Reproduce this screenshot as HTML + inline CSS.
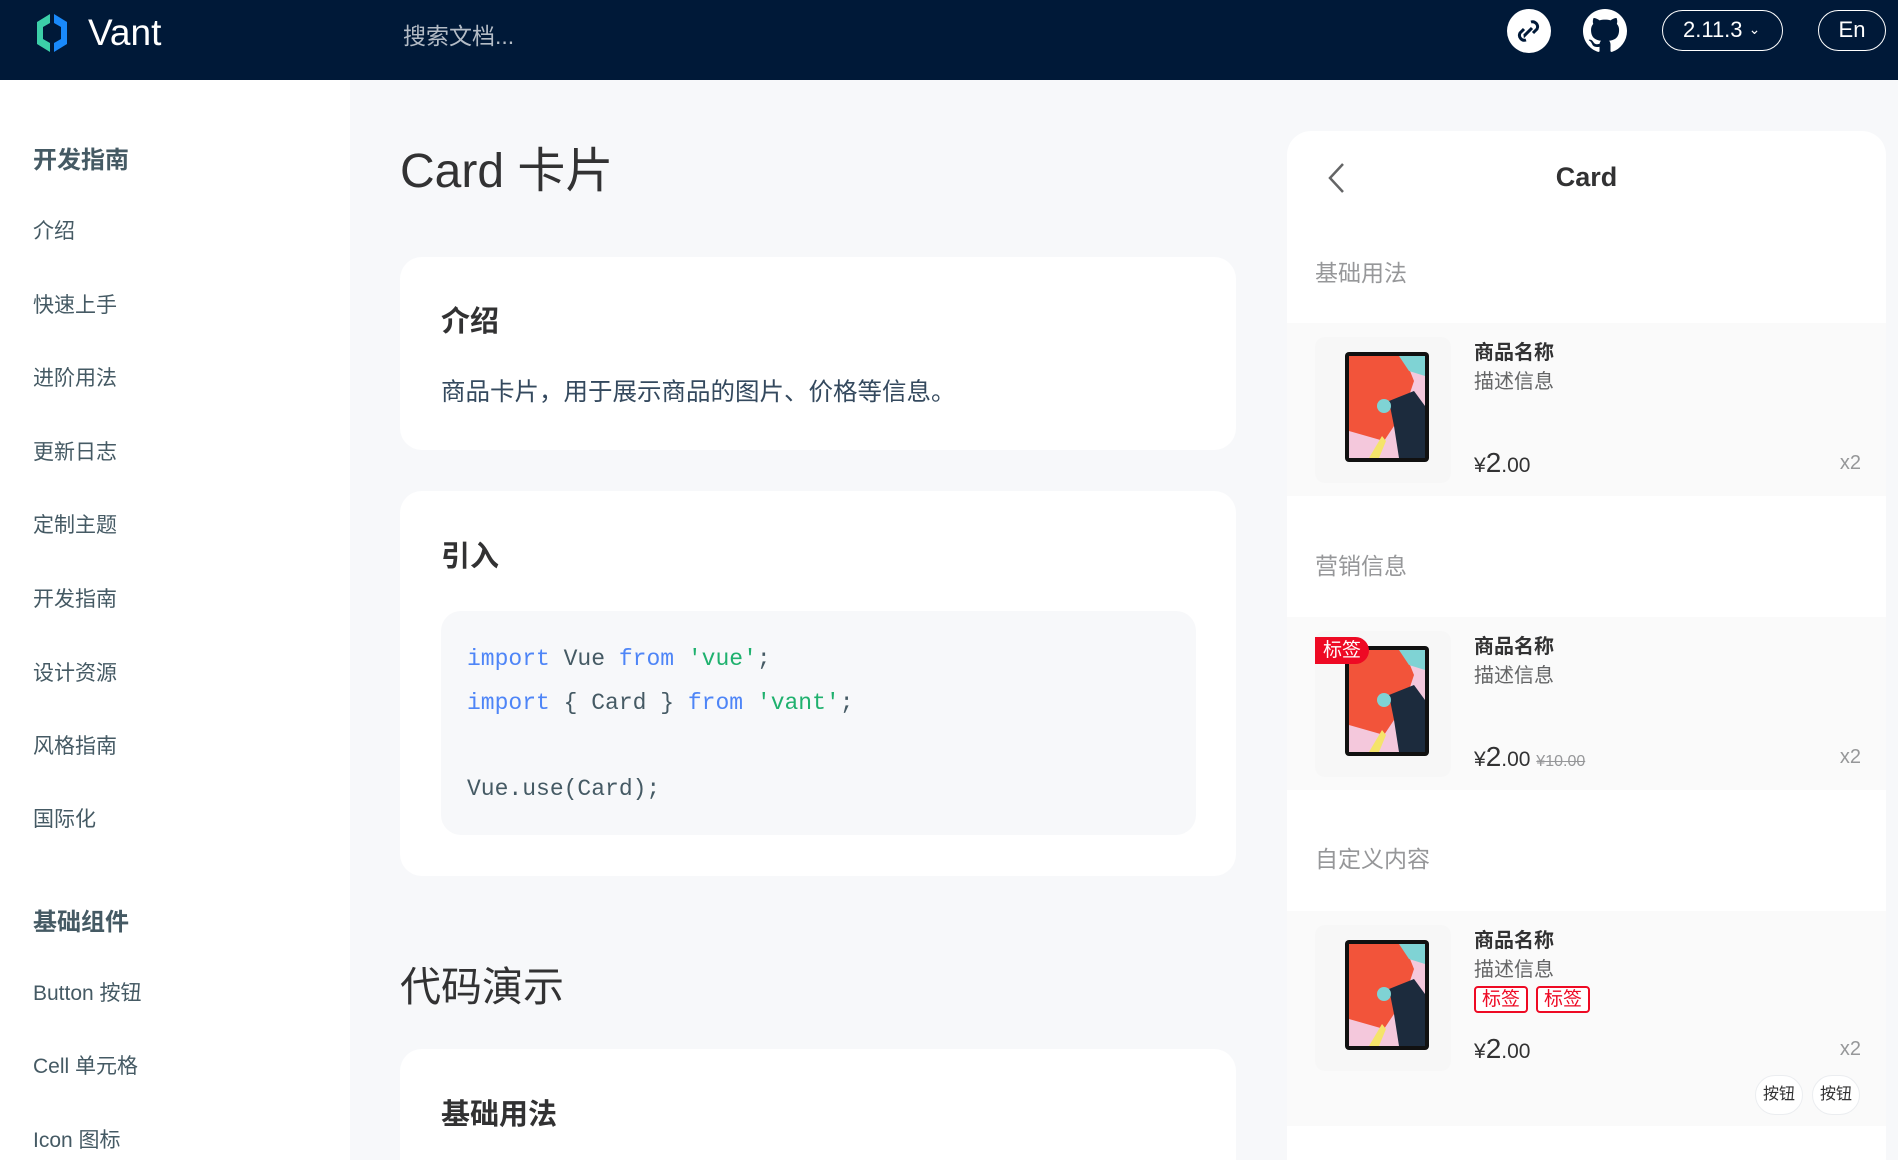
<!DOCTYPE html>
<html style="width:1898px;height:1160px;overflow:hidden"><head><meta charset="utf-8">
<style>
*{margin:0;padding:0;box-sizing:border-box}
body{width:1898px;height:1160px;overflow:hidden;background:#f7f8fa;font-family:"Liberation Sans","Noto Sans CJK SC",sans-serif;position:relative;color:#323233}
.a{position:absolute;white-space:nowrap}
.hdr{position:absolute;left:0;top:0;width:1898px;height:80px;background:#001938}
.side{position:absolute;left:0;top:80px;width:350px;height:1080px;background:#fff}
.sh{font-size:24px;font-weight:bold;color:#455a64;left:33px}
.si{font-size:21px;color:#455a64;left:33px}
.card{position:absolute;left:400px;width:836px;background:#fff;border-radius:22px}
.h3{font-size:29px;font-weight:bold;left:441px}
.mono{font-family:"Liberation Mono",monospace;font-size:23px;color:#455a64}
.kw{color:#4e85f7}.st{color:#1fb16e}
.phone{position:absolute;left:1287px;top:131px;width:599px;height:1029px;background:#fff;border-radius:24px 24px 0 0;overflow:hidden}
.sec{position:absolute;left:28px;font-size:23px;color:#969799}
.gc{position:absolute;left:0;width:599px;background:#fafafa}
.t{position:absolute;left:187px;font-size:20px;font-weight:bold;color:#323233}
.d{position:absolute;left:187px;font-size:20px;color:#646566}
.p{position:absolute;left:187px;font-size:21px;color:#323233}
.p b{font-size:28px;font-weight:normal}
.x{position:absolute;right:25px;font-size:20px;color:#969799}
.tb{position:absolute;left:28px;width:136px;height:146px;background:#f7f7f7;border-radius:10px}
.thumb{position:absolute;left:57px;width:86px;height:112px}
.tag{position:absolute;font-size:19px;color:#ee0a24;border:2px solid #ee0a24;border-radius:4px;width:54px;height:27px;line-height:23px;text-align:center;background:#fff}
.btn{position:absolute;width:48px;height:40px;border:1px solid #ebedf0;border-radius:20px;background:#fff;font-size:16px;line-height:38px;text-align:center}
</style></head><body>
<div class="hdr">
 <svg class="a" style="left:34px;top:12px" width="36" height="42" viewBox="0 0 36 42"><path d="M16 2 L3 10 V32 L16 40 V31 L9 27 V15 L16 11Z" fill="#3ccfa8"/><path d="M20 2 L33 10 V32 L20 40 V31 L27 27 V15 L20 11Z" fill="#1989fa"/></svg>
 <div class="a" style="left:88px;top:12px;font-size:37px;color:#fff">Vant</div>
 <div class="a" style="left:403px;top:17px;font-size:23px;color:#b4bcc6">搜索文档...</div>
 <div class="a" style="left:1507px;top:9px;width:44px;height:44px;border-radius:50%;background:#fff"></div>
 <svg class="a" style="left:1514px;top:16px" width="30" height="30" viewBox="0 0 30 30"><path d="M17 6 a5 5 0 0 1 6 7 l-4 4" fill="none" stroke="#001938" stroke-width="3"/><path d="M18 12 L11 19 a4 4 0 0 1-0-1" fill="none" stroke="#001938" stroke-width="3"/><path d="M12 24 a5 5 0 0 1-6-7 l4-4" fill="none" stroke="#001938" stroke-width="3"/></svg>
 <svg class="a" style="left:1583px;top:9px" width="44" height="44" viewBox="0 0 16 16"><path fill="#fff" d="M8 0C3.58 0 0 3.58 0 8c0 3.54 2.290 6.53 5.47 7.59.4.07.55-.17.55-.38 0-.19-.01-.82-.01-1.49-2.01.37-2.53-.49-2.69-.94-.09-.23-.48-.94-.82-1.130-.28-.15-.68-.52-.01-.53.63-.01 1.080.58 1.230.82.72 1.210 1.870.87 2.330.66.07-.52.28-.87.51-1.07-1.78-.2-3.64-.89-3.64-3.950 0-.87.31-1.590.82-2.150-.08-.2-.36-1.020.08-2.120 0 0 .67-.21 2.200.82.64-.18 1.320-.27 2-.27.68 0 1.360.09 2 .27 1.530-1.040 2.200-.82 2.200-.82.44 1.100.16 1.920.08 2.120.51.56.82 1.270.82 2.150 0 3.070-1.870 3.750-3.650 3.950.29.25.54.73.54 1.480 0 1.070-.01 1.930-.01 2.200 0 .21.15.46.55.38A8.013 8.013 0 0016 8c0-4.420-3.580-8-8-8z"/></svg>
 <div class="a" style="left:1662px;top:10px;width:121px;height:41px;border:1.5px solid #fff;border-radius:21px;color:#fff;font-size:22px;line-height:38px;padding-left:20px">2.11.3 <span style="font-size:14px;position:relative;top:-3px">&#8964;</span></div>
 <div class="a" style="left:1818px;top:10px;width:68px;height:41px;border:1.5px solid #fff;border-radius:21px;color:#fff;font-size:22px;line-height:38px;text-align:center">En</div>
</div>
<div class="side">
 <div class="a sh" style="top:60px">开发指南</div>
 <div class="a si" style="top:135px">介绍</div>
 <div class="a si" style="top:209px">快速上手</div>
 <div class="a si" style="top:282px">进阶用法</div>
 <div class="a si" style="top:356px">更新日志</div>
 <div class="a si" style="top:429px">定制主题</div>
 <div class="a si" style="top:503px">开发指南</div>
 <div class="a si" style="top:577px">设计资源</div>
 <div class="a si" style="top:650px">风格指南</div>
 <div class="a si" style="top:723px">国际化</div>
 <div class="a sh" style="top:822px">基础组件</div>
 <div class="a si" style="top:897px">Button 按钮</div>
 <div class="a si" style="top:970px">Cell 单元格</div>
 <div class="a si" style="top:1044px">Icon 图标</div>
</div>
<div class="a" style="left:400px;top:131px;font-size:48px;color:#323233">Card 卡片</div>
<div class="card" style="top:257px;height:193px"></div>
<div class="a h3" style="top:298px">介绍</div>
<div class="a" style="left:441px;top:373px;font-size:24.5px;color:#34495e">商品卡片，用于展示商品的图片、价格等信息。</div>
<div class="card" style="top:491px;height:385px"></div>
<div class="a h3" style="top:533px">引入</div>
<div class="a" style="left:441px;top:611px;width:755px;height:224px;background:#f7f8fa;border-radius:20px"></div>
<div class="a mono" style="left:467px;top:646px"><span class="kw">import</span> Vue <span class="kw">from</span> <span class="st">'vue'</span>;</div>
<div class="a mono" style="left:467px;top:690px"><span class="kw">import</span> { Card } <span class="kw">from</span> <span class="st">'vant'</span>;</div>
<div class="a mono" style="left:467px;top:776px">Vue.use(Card);</div>
<div class="a" style="left:400px;top:953px;font-size:41px;color:#323233">代码演示</div>
<div class="card" style="top:1049px;height:111px;border-radius:22px 22px 0 0"></div>
<div class="a h3" style="top:1091px">基础用法</div>

<svg width="0" height="0" style="position:absolute"><defs><symbol id="ipad" viewBox="0 0 86 112"><rect x="1" y="1" width="84" height="110" rx="4" fill="#111"/><rect x="5" y="5" width="76" height="102" fill="#f4c8dc"/><path d="M5 5 H60 L70 30 L60 60 L40 90 L5 80Z" fill="#f2543a"/><path d="M55 5 H81 V25 L65 20Z" fill="#7fd3d4"/><path d="M45 50 L70 40 L81 55 V107 H55 L50 75 Z" fill="#1c2b3d"/><path d="M25 107 L38 85 L42 90 L35 107Z" fill="#f5e46a"/><circle cx="40" cy="55" r="7" fill="#7fd3d4"/></symbol></defs></svg>

<div class="phone">
 <svg class="a" style="left:38px;top:30px" width="24" height="34" viewBox="0 0 24 34"><path d="M18 3 L5 17 L18 31" fill="none" stroke="#646566" stroke-width="2.5"/></svg>
 <div class="a" style="left:0;width:599px;text-align:center;top:31px;font-size:27px;font-weight:bold">Card</div>
 <div class="sec" style="top:123px">基础用法</div>
 <div class="gc" style="top:192px;height:173px">
  <div class="tb" style="top:14px"></div>
  <svg class="thumb" style="top:28px"><use href="#ipad"/></svg>
  <div class="t" style="top:13px">商品名称</div>
  <div class="d" style="top:42px">描述信息</div>
  <div class="p" style="top:124px">¥<b>2</b>.00</div>
  <div class="x" style="top:129px">x2</div>
 </div>
 <div class="sec" style="top:416px">营销信息</div>
 <div class="gc" style="top:486px;height:173px">
  <div class="tb" style="top:14px"></div>
  <svg class="thumb" style="top:28px"><use href="#ipad"/></svg>
  <div class="a" style="left:28px;top:20px;width:54px;height:27px;background:#ee0a24;color:#fff;font-size:19px;line-height:27px;text-align:center;border-radius:0 14px 14px 0">标签</div>
  <div class="t" style="top:13px">商品名称</div>
  <div class="d" style="top:42px">描述信息</div>
  <div class="p" style="top:124px">¥<b>2</b>.00 <span style="font-size:16px;color:#969799;text-decoration:line-through">¥10.00</span></div>
  <div class="x" style="top:129px">x2</div>
 </div>
 <div class="sec" style="top:709px">自定义内容</div>
 <div class="gc" style="top:780px;height:215px">
  <div class="tb" style="top:14px"></div>
  <svg class="thumb" style="top:28px"><use href="#ipad"/></svg>
  <div class="t" style="top:13px">商品名称</div>
  <div class="d" style="top:42px">描述信息</div>
  <div class="tag" style="left:187px;top:75px">标签</div>
  <div class="tag" style="left:249px;top:75px">标签</div>
  <div class="p" style="top:122px">¥<b>2</b>.00</div>
  <div class="x" style="top:127px">x2</div>
  <div class="btn" style="left:468px;top:164px">按钮</div>
  <div class="btn" style="left:525px;top:164px">按钮</div>
 </div>
</div>
</body></html>
